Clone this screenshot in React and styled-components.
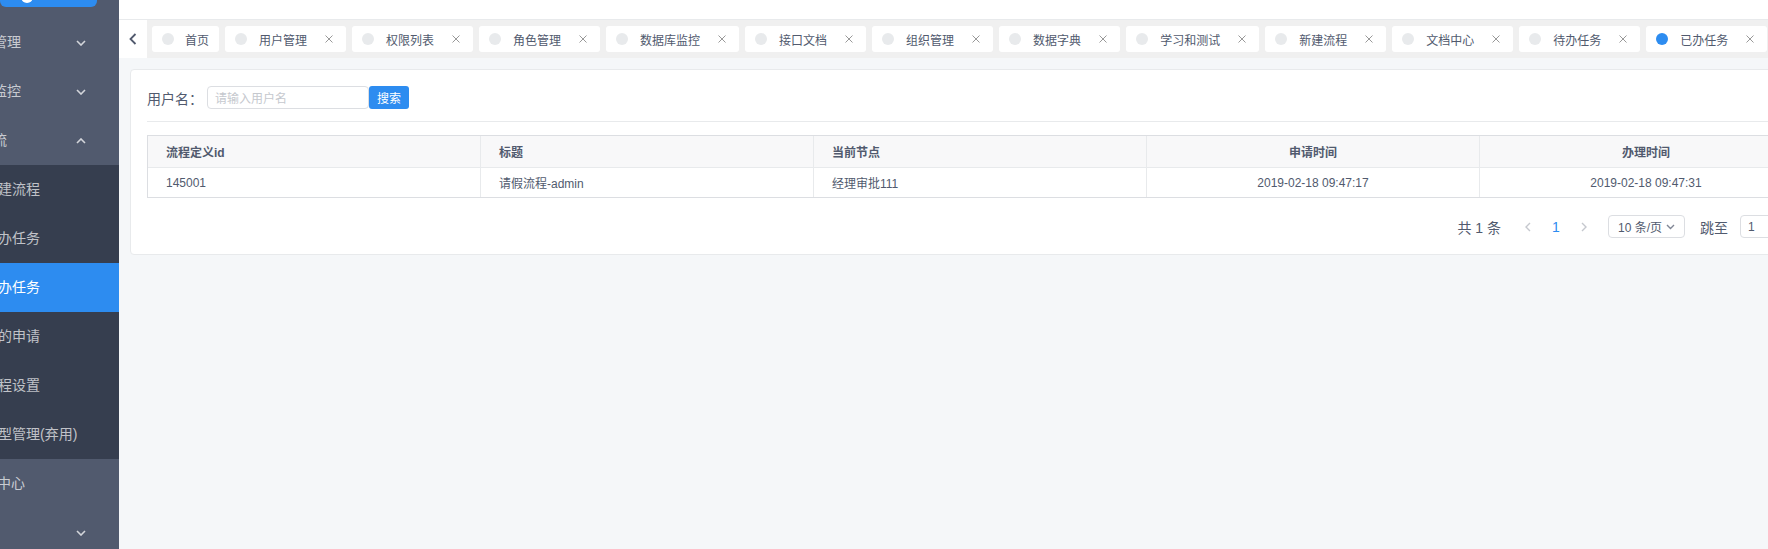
import React from "react";
import styled, { createGlobalStyle } from "styled-components";

const GlobalStyle = createGlobalStyle`
  html, body { margin: 0; padding: 0; overflow: hidden; background: #f5f7f9; }
  body { font-family: "Liberation Sans", "Noto Sans CJK SC", sans-serif; color: #515a6e; }
  * { box-sizing: border-box; }
`;

const Layout = styled.div`
  display: flex;
  width: 1838px;
  height: 549px;
`;

const Sidebar = styled.aside`
  width: 119px;
  flex: none;
  background: #515a6e;
  overflow: hidden;
  display: flex;
  flex-direction: column;
`;

const LogoArea = styled.div`
  height: 18px;
  flex: none;
`;

const LogoBtn = styled.div`
  width: 97px;
  height: 7px;
  background: #2d8cf0;
  border-radius: 0 0 6px 6px;
  position: relative;
  overflow: hidden;
  &::after {
    content: "";
    position: absolute;
    left: 21px;
    top: -9px;
    width: 12px;
    height: 12px;
    border-radius: 50%;
    background: #fff;
  }
`;

const MenuRow = styled.div`
  height: 49px;
  flex: none;
  display: flex;
  align-items: center;
  justify-content: space-between;
  padding-right: 33px;
  font-size: 14px;
  white-space: nowrap;
  background: ${(p) => (p.$active ? "#2d8cf0" : p.$sub ? "#363e4f" : "transparent")};
  color: ${(p) => (p.$active ? "#fff" : "rgba(255,255,255,0.7)")};
`;

const MenuText = styled.span`
  margin-left: ${(p) => p.$offset}px;
  line-height: 21px;
`;

const Chevron = ({ up }) => (
  <svg width="10" height="6" viewBox="0 0 10 6" style={{ flex: "none" }}>
    <path
      d={up ? "M1 5 L5 1 L9 5" : "M1 1 L5 5 L9 1"}
      fill="none"
      stroke="rgba(255,255,255,0.75)"
      strokeWidth="1.6"
    />
  </svg>
);

const Main = styled.main`
  flex: 1;
  display: flex;
  flex-direction: column;
  background: #f5f7f9;
  min-width: 0;
`;

const Header = styled.header`
  height: 20px;
  flex: none;
  background: #fff;
  border-bottom: 1px solid #e8eaec;
`;

const TagsNav = styled.div`
  height: 38px;
  flex: none;
  display: flex;
  background: #f0f0f0;
`;

const NavBtn = styled.div`
  width: 28px;
  flex: none;
  background: #fff;
  display: flex;
  align-items: center;
  justify-content: center;
`;

const TagList = styled.div`
  flex: 1;
  display: flex;
  align-items: center;
  gap: 6px;
  padding-left: 5px;
  overflow: hidden;
`;

const Tag = styled.div`
  flex: none;
  height: 26px;
  display: flex;
  align-items: center;
  background: #fff;
  border-radius: 3px;
  padding: 0 ${(p) => (p.$closable ? 13 : 10)}px 0 10px;
  font-size: 12px;
  color: #515a6e;
  white-space: nowrap;
`;

const Dot = styled.span`
  width: 12px;
  height: 12px;
  border-radius: 50%;
  background: ${(p) => (p.$active ? "#2d8cf0" : "#e8eaec")};
  margin-right: ${(p) => (p.$closable ? 12 : 11)}px;
  flex: none;
`;

const CloseIcon = styled.svg`
  margin-left: 18px;
  flex: none;
`;

const Content = styled.div`
  padding: 11px;
`;

const Card = styled.div`
  background: #fff;
  border: 1px solid #e8eaec;
  border-radius: 4px;
  padding: 16px;
`;

const SearchRow = styled.div`
  display: flex;
  align-items: center;
  height: 23px;
`;

const Label = styled.span`
  font-size: 14px;
  color: #515a6e;
  width: 60px;
`;

const TextInput = styled.div`
  width: ${(p) => p.$w}px;
  height: 23px;
  border: 1px solid #dcdee2;
  border-radius: 4px;
  font-size: 12px;
  color: ${(p) => (p.$placeholder ? "#c5c8ce" : "#515a6e")};
  display: flex;
  align-items: center;
  padding-left: ${(p) => p.$pl || 7}px;
  background: #fff;
`;

const Button = styled.div`
  width: 40px;
  height: 23px;
  background: #2d8cf0;
  color: #fff;
  font-size: 12px;
  border-radius: 3px;
  display: flex;
  align-items: center;
  justify-content: center;
`;

const Divider = styled.div`
  height: 1px;
  background: #e8eaec;
  margin: 12px 0 13px;
`;

const TableWrap = styled.div`
  width: 1665px;
  border: 1px solid #dcdee2;
  border-right: none;
  font-size: 12px;
`;

const Row = styled.div`
  display: grid;
  grid-template-columns: repeat(5, 333px);
  height: ${(p) => (p.$head ? 32 : 29)}px;
  background: ${(p) => (p.$head ? "#f8f8f9" : "#fff")};
  border-bottom: ${(p) => (p.$head ? "1px solid #e8eaec" : "none")};
`;

const Cell = styled.div`
  display: flex;
  align-items: center;
  justify-content: ${(p) => (p.$center ? "center" : "flex-start")};
  padding: 0 18px;
  border-right: 1px solid #e8eaec;
  font-weight: ${(p) => (p.$head ? 700 : 400)};
  color: #515a6e;
  white-space: nowrap;
`;

const Pager = styled.div`
  display: flex;
  justify-content: flex-end;
  align-items: center;
  height: 23px;
  margin-top: 17px;
  width: 1665px;
  font-size: 14px;
  color: #515a6e;
`;

const Total = styled.span`
  margin-right: 13px;
`;

const PageItem = styled.div`
  width: 28px;
  height: 23px;
  display: flex;
  align-items: center;
  justify-content: center;
  color: ${(p) => (p.$active ? "#2d8cf0" : "#c5c8ce")};
  font-size: 14px;
`;

const Select = styled.div`
  width: 77px;
  height: 23px;
  margin-left: 10px;
  border: 1px solid #dcdee2;
  border-radius: 4px;
  display: flex;
  align-items: center;
  justify-content: space-between;
  padding: 0 9px 0 9px;
  font-size: 12px;
`;

const Jump = styled.span`
  margin-left: 15px;
  margin-right: 12px;
`;

const Suffix = styled.span`
  margin-left: 8px;
`;

const X = () => (
  <CloseIcon width="8" height="8" viewBox="0 0 8 8">
    <path d="M0.5 0.5 L7.5 7.5 M7.5 0.5 L0.5 7.5" stroke="#999" strokeWidth="1" fill="none" />
  </CloseIcon>
);

const tags = [
  "首页",
  "用户管理",
  "权限列表",
  "角色管理",
  "数据库监控",
  "接口文档",
  "组织管理",
  "数据字典",
  "学习和测试",
  "新建流程",
  "文档中心",
  "待办任务",
  "已办任务",
];

const menu = [
  { text: "系统管理", offset: -35, chevron: "down" },
  { text: "系统监控", offset: -35, chevron: "down" },
  { text: "工作流", offset: -35, chevron: "up" },
  { text: "新建流程", offset: -16, sub: true },
  { text: "待办任务", offset: -16, sub: true },
  { text: "已办任务", offset: -16, sub: true, active: true },
  { text: "我的申请", offset: -16, sub: true },
  { text: "流程设置", offset: -16, sub: true },
  { text: "模型管理(弃用)", offset: -16, sub: true },
  { text: "文档中心", offset: -31 },
  { text: "其他", offset: -60, chevron: "down" },
];

const columns = [
  { title: "流程定义id" },
  { title: "标题" },
  { title: "当前节点" },
  { title: "申请时间", center: true },
  { title: "办理时间", center: true },
];

const rows = [["145001", "请假流程-admin", "经理审批111", "2019-02-18 09:47:17", "2019-02-18 09:47:31"]];

export default function App() {
  return (
    <>
      <GlobalStyle />
      <Layout>
        <Sidebar>
          <LogoArea>
            <LogoBtn />
          </LogoArea>
          {menu.map((m, i) => (
            <MenuRow key={i} $sub={m.sub} $active={m.active}>
              <MenuText $offset={m.offset}>{m.text}</MenuText>
              {m.chevron && <Chevron up={m.chevron === "up"} />}
            </MenuRow>
          ))}
        </Sidebar>
        <Main>
          <Header />
          <TagsNav>
            <NavBtn>
              <svg width="8" height="12" viewBox="0 0 8 12">
                <path d="M6.5 1 L1.5 6 L6.5 11" fill="none" stroke="#515a6e" strokeWidth="1.8" />
              </svg>
            </NavBtn>
            <TagList>
              {tags.map((t, i) => {
                const closable = i !== 0;
                return (
                  <Tag key={t} $closable={closable}>
                    <Dot $active={i === tags.length - 1} $closable={closable} />
                    <span>{t}</span>
                    {closable && <X />}
                  </Tag>
                );
              })}
            </TagList>
          </TagsNav>
          <Content>
            <Card>
              <SearchRow>
                <Label>用户名：</Label>
                <TextInput $w={162} $placeholder>请输入用户名</TextInput>
                <Button>搜索</Button>
              </SearchRow>
              <Divider />
              <TableWrap>
                <Row $head>
                  {columns.map((c) => (
                    <Cell key={c.title} $head $center={c.center}>
                      {c.title}
                    </Cell>
                  ))}
                </Row>
                {rows.map((r, i) => (
                  <Row key={i}>
                    {r.map((v, j) => (
                      <Cell key={j} $center={columns[j].center}>
                        {v}
                      </Cell>
                    ))}
                  </Row>
                ))}
              </TableWrap>
              <Pager>
                <Total>共 1 条</Total>
                <PageItem>
                  <svg width="6" height="10" viewBox="0 0 6 10">
                    <path d="M5 1 L1 5 L5 9" fill="none" stroke="#c5c8ce" strokeWidth="1.4" />
                  </svg>
                </PageItem>
                <PageItem $active>1</PageItem>
                <PageItem>
                  <svg width="6" height="10" viewBox="0 0 6 10">
                    <path d="M1 1 L5 5 L1 9" fill="none" stroke="#c5c8ce" strokeWidth="1.4" />
                  </svg>
                </PageItem>
                <Select>
                  <span>10 条/页</span>
                  <svg width="9" height="6" viewBox="0 0 9 6">
                    <path d="M1 1 L4.5 4.5 L8 1" fill="none" stroke="#808695" strokeWidth="1.4" />
                  </svg>
                </Select>
                <Jump>跳至</Jump>
                <TextInput $w={50}>1</TextInput>
                <Suffix>页</Suffix>
              </Pager>
            </Card>
          </Content>
        </Main>
      </Layout>
    </>
  );
}
